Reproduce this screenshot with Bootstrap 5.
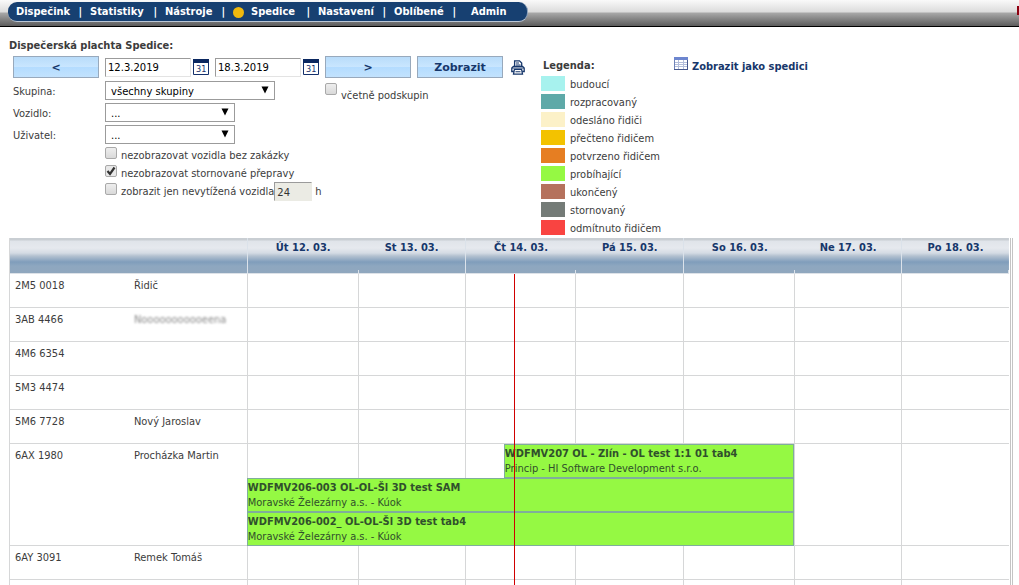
<!DOCTYPE html>
<html lang="cs">
<head>
<meta charset="utf-8">
<meta name="viewport" content="width=device-width, initial-scale=1">
<title>Dispečerská plachta Spedice</title>
<link href="https://cdn.jsdelivr.net/npm/bootstrap@5.3.0/dist/css/bootstrap.min.css" rel="stylesheet">
<style>
:root { --navy: #17376b; --ink: #3c3c3c; --line: #d6d7d8; --wide: "DejaVu Sans", sans-serif; }
body { font: 11px/18px "DejaVu Sans Condensed", "DejaVu Sans", sans-serif; color: var(--ink); background: #fff; }

/* top menu */
.topbar { height: 27px; padding: 2px 0 0 8px; border-bottom: 1px solid #000;
  background: linear-gradient(#fafafa 0, #dcdcdc 12px, #a8a8a8 13px, #5c5c5c 26px); }
.menu { display: grid; grid-template-columns: 74px 75px 68px 85px 76px 70px auto; width: 520px; height: 20px; padding: 0 7px 0 8px;
  background: #174071; border-bottom: 1px solid #b9c6d6; border-right: 1px solid #8fa3bb; border-radius: 9px; font-weight: bold; line-height: 20px; }
.menu li { display: flex; justify-content: space-between; align-items: center; padding-right: 8px; color: #fff; }
.menu li:not(:last-child)::after { content: "|"; }
.menu li:last-child { padding-left: 7px; }
.menu a { color: #fff; text-decoration: none; white-space: nowrap; }
.dot { width: 11px; height: 11px; border-radius: 50%; background: #f0b90d; margin-right: 7px; }
.alert-mark { width: 2px; height: 9px; background: #8c0010; }

/* filter form */
.page-title { font-size: 11px; line-height: 18px; padding: 10px 0 0 9px; }
.filters { width: 540px; padding: 1px 0 0 13px; }
.blue-btn { width: 86px; height: 22px; padding: 0; border: 1px solid #98a9bc; border-radius: 0; color: var(--navy);
  background: linear-gradient(#b9dcfa, #c9e6ff 50%, #b4dcff 51%, #c2e2fd); font: bold 11px/22px var(--wide); }
.blue-btn:hover { background: #d6ebff; color: var(--navy); }
.boxed { border: 1px solid #9b9b9b; border-radius: 0; background-color: #fff; color: #000; font: 10px/16px var(--wide); height: 19px; }
.date-box { width: 86px; padding: 0 2px; border-right-color: #e3e3e3; border-bottom-color: #e3e3e3; }
.date-group { gap: 2px; }
.bar-row { gap: 6px; }
.drop { appearance: none; padding: 2px 20px 0 5px; width: 130px;
  background: #fff url("data:image/svg+xml,%3Csvg xmlns='http://www.w3.org/2000/svg' width='8' height='8'%3E%3Cpath d='M0.5 0.5h7L4 7.5z'/%3E%3C/svg%3E") no-repeat right 5px top 4px; }
.drop-wide { width: 170px; }
.pick-list { display: grid; gap: 3px; margin: 3px 0 2px; width: 312px; }
.pick-list > div { height: 19px; line-height: 22px; }
.field-name { width: 92px; }
.tick { appearance: none; width: 12px; height: 12px; margin: 1px 4px 0 0; border: 1px solid #a9a9a9; border-radius: 2px; background: linear-gradient(#eee, #d9d9d9); flex: none; }
.tick:checked { background: url("data:image/svg+xml,%3Csvg xmlns='http://www.w3.org/2000/svg' width='10' height='10'%3E%3Cpath d='M1.5 5l2.5 3 4.5-6.5' fill='none' stroke='%23333' stroke-width='2.2'/%3E%3C/svg%3E") no-repeat center, #e8e8e8; }
.sub-groups { margin-top: 4px; }
.sub-groups label { padding-top: 5px; }
.opts { padding-left: 92px; }
.opts > div { height: 18px; line-height: 20px; }
.hours { width: 38px; padding: 1px 2px 0; margin: 0 3px 0 0; background: #ebebe4; border-right-color: #ebebe4; border-bottom-color: #ebebe4; color: #333; }
.icon-btn { border: 0; padding: 0; background: none; line-height: 0; }
.print-btn { padding-left: 2px; }
.cal-text { font: 9px "DejaVu Sans Condensed", sans-serif; fill: #14306b; }

/* legend */
.legend-col { width: 134px; padding-left: 1px; }
.legend-title { font-size: 11px; line-height: 18px; margin: 2px 0 0 2px; }
.legend-list li { display: flex; gap: 5px; height: 18px; line-height: 20px; }
.swatch { width: 24px; height: 15px; margin-top: 1px; }
.view-link { color: var(--navy); font-weight: bold; text-decoration: none; gap: 4px; }
.view-link svg { margin-top: 2px; }
.view-link span { padding-top: 3px; }

/* planning board */
.board { position: relative; margin: 1px 6px 0 9px; border-left: 1px solid var(--line); border-right: 3px double #c4c4c4; padding-right: 1px; }
.plan { table-layout: fixed; width: 100%; border-collapse: separate; border-spacing: 0; }
.plan thead { background: linear-gradient(#c9ced3 0, #c9ced3 2px, #e0e4ea 3px, #e6e9ee 10px, #d4dbe4 15px, #b3c1d0 18px, #809dbb 24px, #8ea7c0 28px, #90a7bd 100%); }
.plan th { height: 36px; padding: 0; vertical-align: top; text-align: center; line-height: 19px; color: var(--navy); border-bottom: 1px solid #dde2e8; border-right: 1px solid #dbe2ea; }
.plan th.joined { border-right: 0; background: linear-gradient(#dbe2ea, #dbe2ea) no-repeat right bottom / 1px 3px; }
.plan th:last-child, .plan td:last-child { border-right: 0; }
.plan td { height: 34px; padding: 3px 0 0 5px; vertical-align: top; border-bottom: 1px solid var(--line); border-right: 1px solid var(--line); white-space: nowrap; }
.plan td.car { border-right: 0; }
.plan tr.tall td { height: 102px; }
.plan td.day { position: relative; padding: 0; }
.track { position: absolute; top: 0; left: -1px; z-index: 1; }
.job { height: 34px; padding-top: 1px; border: 1px solid #7fae9b; background: #95f943; color: #30502c; line-height: 15px; overflow: hidden; }
.now { position: absolute; top: 36px; bottom: 0; width: 1px; background: #d00000; z-index: 2; }
.masked { color: #888; filter: blur(1px); }
</style>
</head>
<body class="vh-100 d-flex flex-column overflow-hidden">
<header class="topbar d-flex justify-content-between flex-shrink-0">
  <nav aria-label="Hlavní menu">
    <ul class="menu list-unstyled m-0">
      <li><a href="#">Dispečink</a></li>
      <li><a href="#">Statistiky</a></li>
      <li><a href="#">Nástroje</a></li>
      <li><a href="#" class="d-flex align-items-center"><span class="dot"></span>Spedice</a></li>
      <li><a href="#">Nastavení</a></li>
      <li><a href="#">Oblíbené</a></li>
      <li><a href="#">Admin</a></li>
    </ul>
  </nav>
  <span class="alert-mark mt-1"></span>
</header>

<main class="d-flex flex-column flex-grow-1 overflow-hidden">
  <h1 class="page-title fw-bold m-0">Dispečerská plachta Spedice:</h1>
  <div class="d-flex flex-shrink-0">
    <form class="filters flex-shrink-0" onsubmit="return false">
      <div class="bar-row d-flex align-items-center">
        <button type="button" class="btn blue-btn">&lt;</button>
        <div class="date-group d-flex align-items-center">
          <input class="boxed date-box" value="12.3.2019" aria-label="Od">
          <button type="button" class="icon-btn" aria-label="Kalendář od"><svg width="16" height="16"><path fill="#fff" stroke="#14306b" d="M.5.5h15v15H.5z"/><path fill="#0b2860" d="M0 0h16v4H0z"/><text class="cal-text" x="3" y="13">31</text></svg></button>
        </div>
        <div class="date-group d-flex align-items-center">
          <input class="boxed date-box" value="18.3.2019" aria-label="Do">
          <button type="button" class="icon-btn" aria-label="Kalendář do"><svg width="16" height="16"><path fill="#fff" stroke="#14306b" d="M.5.5h15v15H.5z"/><path fill="#0b2860" d="M0 0h16v4H0z"/><text class="cal-text" x="3" y="13">31</text></svg></button>
        </div>
        <button type="button" class="btn blue-btn">&gt;</button>
        <button type="submit" class="btn blue-btn">Zobrazit</button>
        <button type="button" class="icon-btn print-btn" aria-label="Tisk"><svg width="14" height="15" viewBox="0 0 14 15"><g fill="#fff" stroke="#17376b" stroke-width="1.3"><path d="M3.6 6.5V.8h4.9l2.2 2.2v3.5"/><path d="M2.8 11.5H.8V8l1.6-1.6h9.2L13.2 8v3.5h-2"/><path d="M3.4 9.4h7.2l.9 4.8h-9z"/></g><path d="M5 3h3M5 5h4.5M1 8h12M4.5 11.8h5" stroke="#17376b" stroke-width="1.1"/></svg></button>
      </div>
      <div class="d-flex">
        <div class="pick-list">
          <div class="d-flex"><label class="field-name" for="skupina">Skupina:</label><select id="skupina" class="boxed drop drop-wide"><option>všechny skupiny</option></select></div>
          <div class="d-flex"><label class="field-name" for="vozidlo">Vozidlo:</label><select id="vozidlo" class="boxed drop"><option>...</option></select></div>
          <div class="d-flex"><label class="field-name" for="uzivatel">Uživatel:</label><select id="uzivatel" class="boxed drop"><option>...</option></select></div>
        </div>
        <div class="sub-groups d-flex"><input type="checkbox" class="tick" id="podskupiny"><label for="podskupiny">včetně podskupin</label></div>
      </div>
      <div class="opts">
        <div class="d-flex"><input type="checkbox" class="tick" id="bez-zakazky"><label for="bez-zakazky">nezobrazovat vozidla bez zakázky</label></div>
        <div class="d-flex"><input type="checkbox" class="tick" id="stornovane" checked><label for="stornovane">nezobrazovat stornované přepravy</label></div>
        <div class="d-flex"><input type="checkbox" class="tick" id="nevytizena"><label for="nevytizena">zobrazit jen nevytížená vozidla</label><input class="boxed hours" value="24" aria-label="Počet hodin"><span>h</span></div>
      </div>
    </form>
    <section class="legend-col flex-shrink-0">
      <h2 class="legend-title fw-bold">Legenda:</h2>
      <ul class="legend-list list-unstyled m-0" id="legend"></ul>
    </section>
    <div><a href="#" class="view-link d-flex"><svg width="14" height="13"><path fill="#fff" stroke="#6f83b8" d="M.5.5h13v12H.5z"/><path fill="#6d86cf" d="M0 0h14v3H0z"/><path d="M4.500 3v9M9.500 3v9M1 5.500h12M1 7.500h12M1 9.500h12" stroke="#b3bedb"/><path d="M0 12.500h14M13.500 3v10" stroke="#45578c"/></svg><span>Zobrazit jako spedici</span></a></div>
  </div>

  <div class="board flex-grow-1 flex-shrink-0">
    <table class="plan">
      <colgroup id="cols"></colgroup>
      <thead><tr id="days"><th colspan="2"></th></tr></thead>
      <tbody id="rows"></tbody>
    </table>
    <div class="now" id="now"></div>
  </div>
</main>

<script src="https://cdn.jsdelivr.net/npm/bootstrap@5.3.0/dist/js/bootstrap.bundle.min.js"></script>
<script>
const statuses = [["budoucí", "#a7f2ee"], ["rozpracovaný", "#5ea9a8"], ["odesláno řidiči", "#fcf1c8"], ["přečteno řidičem", "#f3c200"],
  ["potvrzeno řidičem", "#e67e22"], ["probíhající", "#95f943"], ["ukončený", "#b5725d"], ["stornovaný", "#747b77"], ["odmítnuto řidičem", "#f94441"]];
const days = ["Út 12. 03.", "St 13. 03.", "Čt 14. 03.", "Pá 15. 03.", "So 16. 03.", "Ne 17. 03.", "Po 18. 03."];
/* column widths in per cent of the board: car, driver, then the days */
const widths = [11.9, 11.9, 11.1, 10.7, 11.1, 10.8, 11.1, 10.7, 10.7];
/* start and length of a job in per cent of the first day column */
const jobs = [
  ["WDFMV207 OL - Zlín - OL test 1:1 01 tab4", "Princip - HI Software Development s.r.o.", 234, 264],
  ["WDFMV206-003 OL-OL-Šl 3D test SAM", "Moravské Železárny a.s. - Kúok", 0, 498],
  ["WDFMV206-002_ OL-OL-Šl 3D test tab4", "Moravské Železárny a.s. - Kúok", 0, 498]];
const cars = [["2M5 0018", "Řidič"], ["3AB 4466", "<span class='masked'>Nooooooooooeena</span>"], ["4M6 6354", ""], ["5M3 4474", ""],
  ["5M6 7728", "Nový Jaroslav"], ["6AX 1980", "Procházka Martin", jobs], ["6AY 3091", "Remek Tomáš"], ["", ""]];

document.getElementById("legend").innerHTML = statuses.map(([n, c]) => `<li><span class="swatch" style="background:${c}"></span>${n}</li>`).join("");
document.getElementById("cols").innerHTML = widths.map(w => `<col style="width:${w}%">`).join("");
document.getElementById("days").innerHTML += days.map((d, i) => `<th${i % 2 ? "" : ' class="joined"'}>${d}</th>`).join("");
document.getElementById("rows").innerHTML = cars.map(([plate, driver, list]) => {
  const track = list ? `<div class="track w-100">${list.map(([t, s, x, w]) =>
    `<div class="job" style="margin-left:${x}%;width:${w}%"><b>${t}</b><br>${s}</div>`).join("")}</div>` : "";
  return `<tr${list ? ' class="tall"' : ""}><td class="car">${plate}</td><td>${driver}</td>` +
    days.map((d, i) => `<td class="day">${i ? "" : track}</td>`).join("") + "</tr>";
}).join("");
document.getElementById("now").style.left = "50.4%";
</script>
</body>
</html>
